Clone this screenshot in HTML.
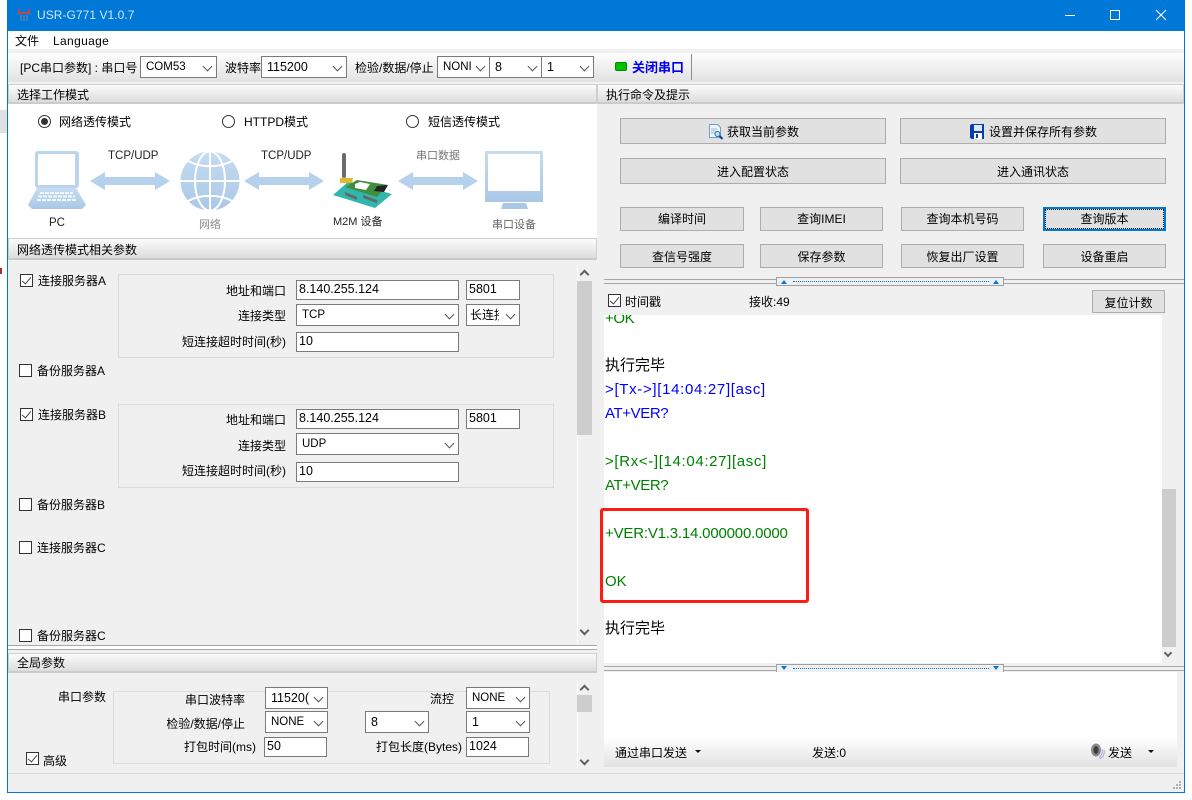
<!DOCTYPE html>
<html lang="zh"><head><meta charset="utf-8"><title>USR-G771 V1.0.7</title>
<style>
html,body{margin:0;padding:0;background:#fff}
body{width:1192px;height:800px;position:relative;overflow:hidden;font:12px/16px "Liberation Sans","WenQuanYi Zen Hei","Noto Sans CJK SC",sans-serif;color:#000}
div,span{position:absolute;box-sizing:border-box;white-space:nowrap}
svg{position:absolute}
.hd{background:linear-gradient(#fbfbfb,#dddddd);border:1px solid #cfcfcf;border-bottom:2px solid #cbcbcb;height:20px;padding:2px 0 0 8px;border-radius:1px}
.btn{background:#e1e1e1;border:1px solid #adadad;text-align:center;line-height:26px}
.in{background:#fff;border:1px solid #7a7a7a;padding-left:2px;line-height:17px;height:20px;overflow:hidden;font-size:12.5px}
.sel{background:#fff;border:1px solid #7a7a7a;padding:1px 0 0 5px;line-height:18px;height:22px;overflow:hidden;font-size:12.5px}
.sel b{position:absolute;right:0;top:0;bottom:0;width:20px;background:#fff}
.sel i{position:absolute;right:5px;top:6px;width:6px;height:6px;border-right:1px solid #555;border-bottom:1px solid #555;transform:rotate(45deg);z-index:2}
.r{text-align:right}
.cb{width:13px;height:13px;border:1px solid #333;background:#fff}
.cb.on::after{content:"";position:absolute;left:3px;top:0;width:4px;height:8px;border-right:1px solid #444;border-bottom:1px solid #444;transform:rotate(40deg)}
.rad{width:13px;height:13px;border:1px solid #333;border-radius:50%;background:#fff}
.rad.on::after{content:"";position:absolute;left:2px;top:2px;width:7px;height:7px;border-radius:50%;background:#333}
.grp{border:1px solid #dcdcdc}
.sb{background:#f0f0f0}
.th{background:#cdcdcd}
.up,.dn{width:7px;height:7px;border-left:2px solid #606060;border-top:2px solid #606060;transform:rotate(45deg)}
.dn{transform:rotate(225deg)}
.spl{height:5px;border-top:1px solid #a8a8a8;border-bottom:1px solid #a8a8a8;background:#fff}
.h{background:#f0f0f0;border:1px solid #a0a0a0;height:9px}
.log{font-size:15px;line-height:24px;height:24px}
.blue{color:#0000ff}.green{color:#008000}
.sm{font-size:11px;color:#222}
</style></head><body>

<div style="left:0;top:110px;width:7px;height:23px;background:#e0e0e0"></div>
<div style="left:0;top:268px;width:2px;height:6px;background:#b03030"></div>

<!-- window -->
<div style="left:7px;top:0;width:1178px;height:793px;background:#f0f0f0;border:1px solid #0078d7"></div>
<div style="left:7px;top:0;width:1178px;height:31px;background:#0078d7"></div>
<svg style="left:17px;top:8px" width="14" height="14" viewBox="0 0 14 14"><path d="M1 1h2v3h8V1h2v5H1z" fill="#c04a4a"/><path d="M3 7h2v6H3zM6 7h2v6H6zM9 7h2v6H9z" fill="#3f7fb5"/></svg>
<span style="left:37px;top:7px;color:#fff;font-size:12px;opacity:.82;letter-spacing:.05px">USR-G771 V1.0.7</span>
<svg style="left:1060px;top:8px" width="120" height="16" viewBox="0 0 120 16" fill="none" stroke="#fff"><path d="M5 7.5h10" stroke-width="1"/><rect x="50.5" y="2.5" width="9" height="9"/><path d="M96 2l10 10M106 2l-10 10" stroke-width="1.1"/></svg>
<div style="left:8px;top:31px;width:1176px;height:18px;background:#fff"></div>
<span style="left:15px;top:33px">文件</span>
<span style="left:53px;top:33px;letter-spacing:.35px">Language</span>

<!-- toolbar -->
<div style="left:8px;top:53px;width:1176px;height:29px;background:linear-gradient(#fdfdfd,#e2e2e2)"></div>
<span style="left:20px;top:60px">[PC串口参数] : 串口号</span>
<div class="sel" style="left:140px;top:56px;width:77px;font-size:11.5px">COM53<i></i></div>
<span style="left:225px;top:60px">波特率</span>
<div class="sel" style="left:261px;top:56px;width:86px">115200<i></i></div>
<span style="left:355px;top:60px">检验/数据/停止</span>
<div class="sel" style="left:437px;top:56px;width:53px;font-size:11.5px">NONI<i></i></div>
<div class="sel" style="left:489px;top:56px;width:53px">8<i></i></div>
<div class="sel" style="left:541px;top:56px;width:53px">1<i></i></div>
<div style="left:615px;top:62px;width:12px;height:9px;background:#00c000;border:1px solid #008a00;border-radius:2px"></div>
<span style="left:632px;top:60px;color:#0000f0;font-weight:bold;font-size:13px">关闭串口</span>
<div style="left:691px;top:54px;width:1px;height:26px;background:#8c8c8c"></div>

<!-- left panel headers -->
<div class="hd" style="left:8px;top:84px;width:589px">选择工作模式</div>
<div class="hd" style="left:597px;top:84px;width:587px">执行命令及提示</div>

<div style="left:8px;top:104px;width:589px;height:134px;background:#fff"></div>
<div class="rad on" style="left:38px;top:115px"></div><span style="left:59px;top:114px">网络透传模式</span>
<div class="rad" style="left:222px;top:115px"></div><span style="left:244px;top:114px">HTTPD模式</span>
<div class="rad" style="left:406px;top:115px"></div><span style="left:428px;top:114px">短信透传模式</span>

<!-- illustration -->
<svg style="left:8px;top:104px" width="589" height="134" viewBox="8 104 589 134">
<defs><linearGradient id="g" x1="0" y1="0" x2="0" y2="1"><stop offset="0" stop-color="#c6dcf1"/><stop offset="1" stop-color="#a9c8e6"/></linearGradient></defs>
<!-- laptop -->
<rect x="35" y="151" width="44" height="37" rx="3" fill="#bcd5ee"/><rect x="38" y="154" width="37" height="31" fill="#fff"/>
<path d="M37 188h39l10 17-4 4H32l-4-4z" fill="url(#g)"/>
<path d="M40 193h33M38 196.500h37M37 200h39" stroke="#f2f7fc" stroke-width="2" stroke-dasharray="4 1" fill="none"/>
<!-- arrows -->
<path d="M90 181l15-9v5h50v-5l15 9-15 9v-5h-50v5z" fill="#b5d1ec"/>
<path d="M244 181l15-9v5h50v-5l15 9-15 9v-5h-50v5z" fill="#b5d1ec"/>
<path d="M398 181l15-9v5h50v-5l15 9-15 9v-5h-50v5z" fill="#b5d1ec"/>
<!-- globe -->
<circle cx="210" cy="181" r="29.500" fill="url(#g)"/>
<g fill="none" stroke="#fff" stroke-width="2"><path d="M210 151v60M180.500 181h59M188 161c13 7 31 7 44 0M188 201c13-7 31-7 44 0"/><ellipse cx="210" cy="181" rx="15" ry="29.500"/></g>
<!-- device -->
<path d="M333 195l15-13 44 12-17 14z" fill="#2fb7ad"/>
<path d="M345 192l12 5v3l-12-5zM363 195l14 5v3l-14-5z" fill="#666"/>
<path d="M345 187l12-7 31 5-11 12z" fill="#3f8f3c"/>
<path d="M355 184l5-2 10 2-4 6-11-2z" fill="#fff"/><path d="M377 186l11-1-4 7-10-1z" fill="#222"/>
<rect x="342" y="153" width="4" height="25" rx="2" fill="#6b6b6b"/>
<path d="M340 178h13l-1 5h-12z" fill="#e0b92c"/>
<!-- monitor -->
<rect x="485" y="151" width="58" height="51" fill="url(#g)"/><rect x="488" y="154" width="52" height="37" fill="#fff"/>
<path d="M503 203h23l2 6h-27z" fill="#a9c8e6"/>
</svg>
<span class="sm" style="left:108px;top:148px;font-size:11.500px">TCP/UDP</span>
<span class="sm" style="left:261px;top:148px;font-size:11.500px">TCP/UDP</span>
<span class="sm" style="left:416px;top:148px;color:#777">串口数据</span>
<span class="sm" style="left:49px;top:215px;font-size:11.500px">PC</span>
<span class="sm" style="left:199px;top:217px;color:#8a8a8a">网络</span>
<span class="sm" style="left:333px;top:214px">M2M 设备</span>
<span class="sm" style="left:492px;top:217px;color:#666">串口设备</span>

<div class="hd" style="left:8px;top:238px;width:589px;height:22px;padding-top:3px">网络透传模式相关参数</div>

<!-- server scroll -->
<div style="left:8px;top:260px;width:569px;height:384px;overflow:hidden">
<div class="cb on" style="left:12px;top:14px"></div><span style="left:30px;top:13px">连接服务器A</span>
<div class="grp" style="left:110px;top:14px;width:436px;height:84px"></div>
<span class="r" style="left:118px;width:160px;top:23px">地址和端口</span>
<div class="in" style="left:288px;top:20px;width:163px">8.140.255.124</div><div class="in" style="left:458px;top:20px;width:54px">5801</div>
<span class="r" style="left:118px;width:160px;top:48px">连接类型</span>
<div class="sel" style="left:288px;top:44px;width:163px;font-size:11.500px">TCP<i></i></div>
<div class="sel" style="left:458px;top:44px;width:54px;padding-left:3px;font-size:12px">长连接<b></b><i></i></div>
<span class="r" style="left:118px;width:160px;top:74px">短连接超时时间(秒)</span>
<div class="in" style="left:288px;top:72px;width:163px">10</div>
<div class="cb" style="left:11px;top:104px"></div><span style="left:29px;top:103px">备份服务器A</span>

<div class="cb on" style="left:12px;top:148px"></div><span style="left:30px;top:147px">连接服务器B</span>
<div class="grp" style="left:110px;top:144px;width:436px;height:84px"></div>
<span class="r" style="left:118px;width:160px;top:152px">地址和端口</span>
<div class="in" style="left:288px;top:149px;width:163px">8.140.255.124</div><div class="in" style="left:458px;top:149px;width:54px">5801</div>
<span class="r" style="left:118px;width:160px;top:178px">连接类型</span>
<div class="sel" style="left:288px;top:173px;width:163px;font-size:11.500px">UDP<i></i></div>
<span class="r" style="left:118px;width:160px;top:203px">短连接超时时间(秒)</span>
<div class="in" style="left:288px;top:202px;width:163px">10</div>
<div class="cb" style="left:11px;top:238px"></div><span style="left:29px;top:237px">备份服务器B</span>
<div class="cb" style="left:11px;top:281px"></div><span style="left:29px;top:280px">连接服务器C</span>
<div class="cb" style="left:11px;top:369px"></div><span style="left:29px;top:368px">备份服务器C</span>
</div>
<div class="sb" style="left:577px;top:265px;width:15px;height:378px;border-left:1px solid #fff"></div>
<div class="th" style="left:577px;top:281px;width:15px;height:154px"></div>
<div class="up" style="left:581px;top:271px"></div>
<div class="dn" style="left:581px;top:627px"></div>
<div class="spl" style="left:8px;top:645px;width:589px"></div>

<div class="hd" style="left:8px;top:653px;width:589px;padding-top:1px">全局参数</div>
<span style="left:58px;top:689px">串口参数</span>
<div class="grp" style="left:113px;top:691px;width:437px;height:73px"></div>
<span class="r" style="left:125px;width:120px;top:692px">串口波特率</span>
<div class="sel" style="left:265px;top:687px;width:63px">11520(<b style="width:18px"></b><i></i></div>
<span style="left:430px;top:691px">流控</span>
<div class="sel" style="left:466px;top:687px;width:64px;font-size:11.500px">NONE<i></i></div>
<span class="r" style="left:125px;width:120px;top:716px">检验/数据/停止</span>
<div class="sel" style="left:265px;top:711px;width:63px;font-size:11.500px">NONE<i></i></div>
<div class="sel" style="left:365px;top:711px;width:64px">8<i></i></div>
<div class="sel" style="left:466px;top:711px;width:64px">1<i></i></div>
<span class="r" style="left:125px;width:131px;top:739px">打包时间(ms)</span>
<div class="in" style="left:264px;top:737px;width:63px">50</div>
<span class="r" style="left:340px;width:122px;top:739px">打包长度(Bytes)</span>
<div class="in" style="left:466px;top:737px;width:63px">1024</div>
<div class="cb on" style="left:26px;top:752px"></div><span style="left:43px;top:753px">高级</span>
<div class="sb" style="left:577px;top:680px;width:15px;height:88px;border-left:1px solid #fff"></div>
<div class="th" style="left:577px;top:695px;width:15px;height:17px"></div>
<div class="up" style="left:581px;top:686px"></div>
<div class="dn" style="left:581px;top:757px"></div>

<!-- right -->
<div class="btn" style="left:620px;top:118px;width:266px;height:26px;padding-left:20px">获取当前参数</div>
<svg style="left:708px;top:124px" width="16" height="16" viewBox="0 0 16 16"><path d="M1.500.5h8l3 3v10h-11z" fill="#eef5fc" stroke="#6f9fd0"/><path d="M3 5h6M3 7h5M3 9h4" stroke="#9db9d8"/><circle cx="9.500" cy="10" r="2.500" fill="#bfe6f5" stroke="#2a6aa8"/><path d="M11.500 12l3 3" stroke="#123f9c" stroke-width="2"/></svg>
<div class="btn" style="left:900px;top:118px;width:266px;height:26px;padding-left:20px">设置并保存所有参数</div>
<svg style="left:969px;top:123px" width="16" height="17" viewBox="0 0 16 17"><path d="M1 2l2-1h12v15H3l-2-1z" fill="#0a3fa8"/><rect x="5" y="2" width="8" height="6" fill="#dbe8fa"/><rect x="5" y="10" width="8" height="6" fill="#fff"/><rect x="7" y="11" width="2" height="4" fill="#0a3fa8"/></svg>
<div class="btn" style="left:620px;top:158px;width:266px;height:26px">进入配置状态</div>
<div class="btn" style="left:900px;top:158px;width:266px;height:26px">进入通讯状态</div>

<div class="btn" style="left:620px;top:207px;width:124px;height:24px;line-height:23px">编译时间</div>
<div class="btn" style="left:760px;top:207px;width:123px;height:24px;line-height:23px">查询IMEI</div>
<div class="btn" style="left:901px;top:207px;width:123px;height:24px;line-height:23px">查询本机号码</div>
<div class="btn" style="left:1043px;top:207px;width:123px;height:24px;line-height:21px;border:2px solid #0078d7;outline:1px dotted #000;outline-offset:-3px">查询版本</div>
<div class="btn" style="left:620px;top:244px;width:124px;height:24px;line-height:24px">查信号强度</div>
<div class="btn" style="left:760px;top:244px;width:123px;height:24px;line-height:24px">保存参数</div>
<div class="btn" style="left:901px;top:244px;width:123px;height:24px;line-height:24px">恢复出厂设置</div>
<div class="btn" style="left:1043px;top:244px;width:123px;height:24px;line-height:24px">设备重启</div>

<div class="spl" style="left:604px;top:279px;width:580px;background:#f0f0f0"></div>
<div class="h" style="left:776px;top:277px;width:228px"></div>
<div style="left:793px;top:281px;width:196px;border-top:1px dotted #0078d7"></div>
<svg style="left:781px;top:279px" width="220" height="5"><path d="M0 5l3-4 3 4zM212 5l3-4 3 4z" fill="#0078d7"/></svg>

<div class="cb on" style="left:608px;top:294px"></div><span style="left:625px;top:294px">时间戳</span>
<span style="left:749px;top:294px">接收:49</span>
<div class="btn" style="left:1092px;top:290px;width:73px;height:23px;line-height:24px">复位计数</div>

<div style="left:604px;top:315px;width:558px;height:348px;background:#fff;overflow:hidden">
<span class="log green" style="left:1px;top:-8px;letter-spacing:-.4px">+OK</span>
<span class="log" style="left:1px;top:39px">执行完毕</span>
<span class="log blue" style="left:1px;top:63px;letter-spacing:.68px">&gt;[Tx-&gt;][14:04:27][asc]</span>
<span class="log blue" style="left:1px;top:87px;letter-spacing:-.4px">AT+VER?</span>
<span class="log green" style="left:1px;top:135px;letter-spacing:.65px">&gt;[Rx&lt;-][14:04:27][asc]</span>
<span class="log green" style="left:1px;top:159px;letter-spacing:-.4px">AT+VER?</span>
<span class="log green" style="left:1px;top:207px;letter-spacing:-.19px">+VER:V1.3.14.000000.0000</span>
<span class="log green" style="left:1px;top:255px">OK</span>
<span class="log" style="left:1px;top:302px">执行完毕</span>
</div>
<div class="sb" style="left:1162px;top:315px;width:14px;height:348px"></div>
<div class="th" style="left:1162px;top:489px;width:14px;height:158px"></div>
<div class="dn" style="left:1165px;top:650px;width:6px;height:6px"></div>
<div style="left:600px;top:508px;width:209px;height:95px;border:3px solid #fd1b14;border-radius:3px"></div>

<div class="spl" style="left:604px;top:666px;width:580px;background:#f0f0f0"></div>
<div class="h" style="left:776px;top:664px;width:228px"></div>
<div style="left:793px;top:668px;width:196px;border-top:1px dotted #0078d7"></div>
<svg style="left:781px;top:666px" width="220" height="5"><path d="M0 0l3 4 3-4zM212 0l3 4 3-4z" fill="#0078d7"/></svg>

<div style="left:604px;top:672px;width:573px;height:65px;background:#fff"></div>
<div style="left:604px;top:737px;width:573px;height:30px;background:linear-gradient(#fff,#e2e2e2)"></div>
<span style="left:615px;top:745px">通过串口发送</span>
<svg style="left:695px;top:750px" width="6" height="4"><path d="M0 0h6L3 3z" fill="#111"/></svg>
<span style="left:812px;top:745px">发送:0</span>
<svg style="left:1090px;top:743px" width="16" height="17" viewBox="0 0 16 17"><ellipse cx="6" cy="7" rx="5" ry="6.500" fill="#8a8a8a"/><ellipse cx="6" cy="7" rx="2.500" ry="4" fill="#3f3f3f"/><path d="M12 6c1 3 0 6-3 9M14 7c1 4-1 7-4 9" stroke="#a8a8e8" fill="none"/></svg>
<span style="left:1108px;top:745px">发送</span>
<svg style="left:1148px;top:750px" width="6" height="4"><path d="M0 0h6L3 3z" fill="#111"/></svg>

<div style="left:8px;top:773px;width:1176px;height:1px;background:#d8d8d8"></div>
<svg style="left:1172px;top:781px" width="10" height="10"><path d="M7 0h2v2H7zM4 3h2v2H4zM7 3h2v2H7zM1 6h2v2H1zM4 6h2v2H4zM7 6h2v2H7z" fill="#b0b0b0"/></svg>
</body></html>
